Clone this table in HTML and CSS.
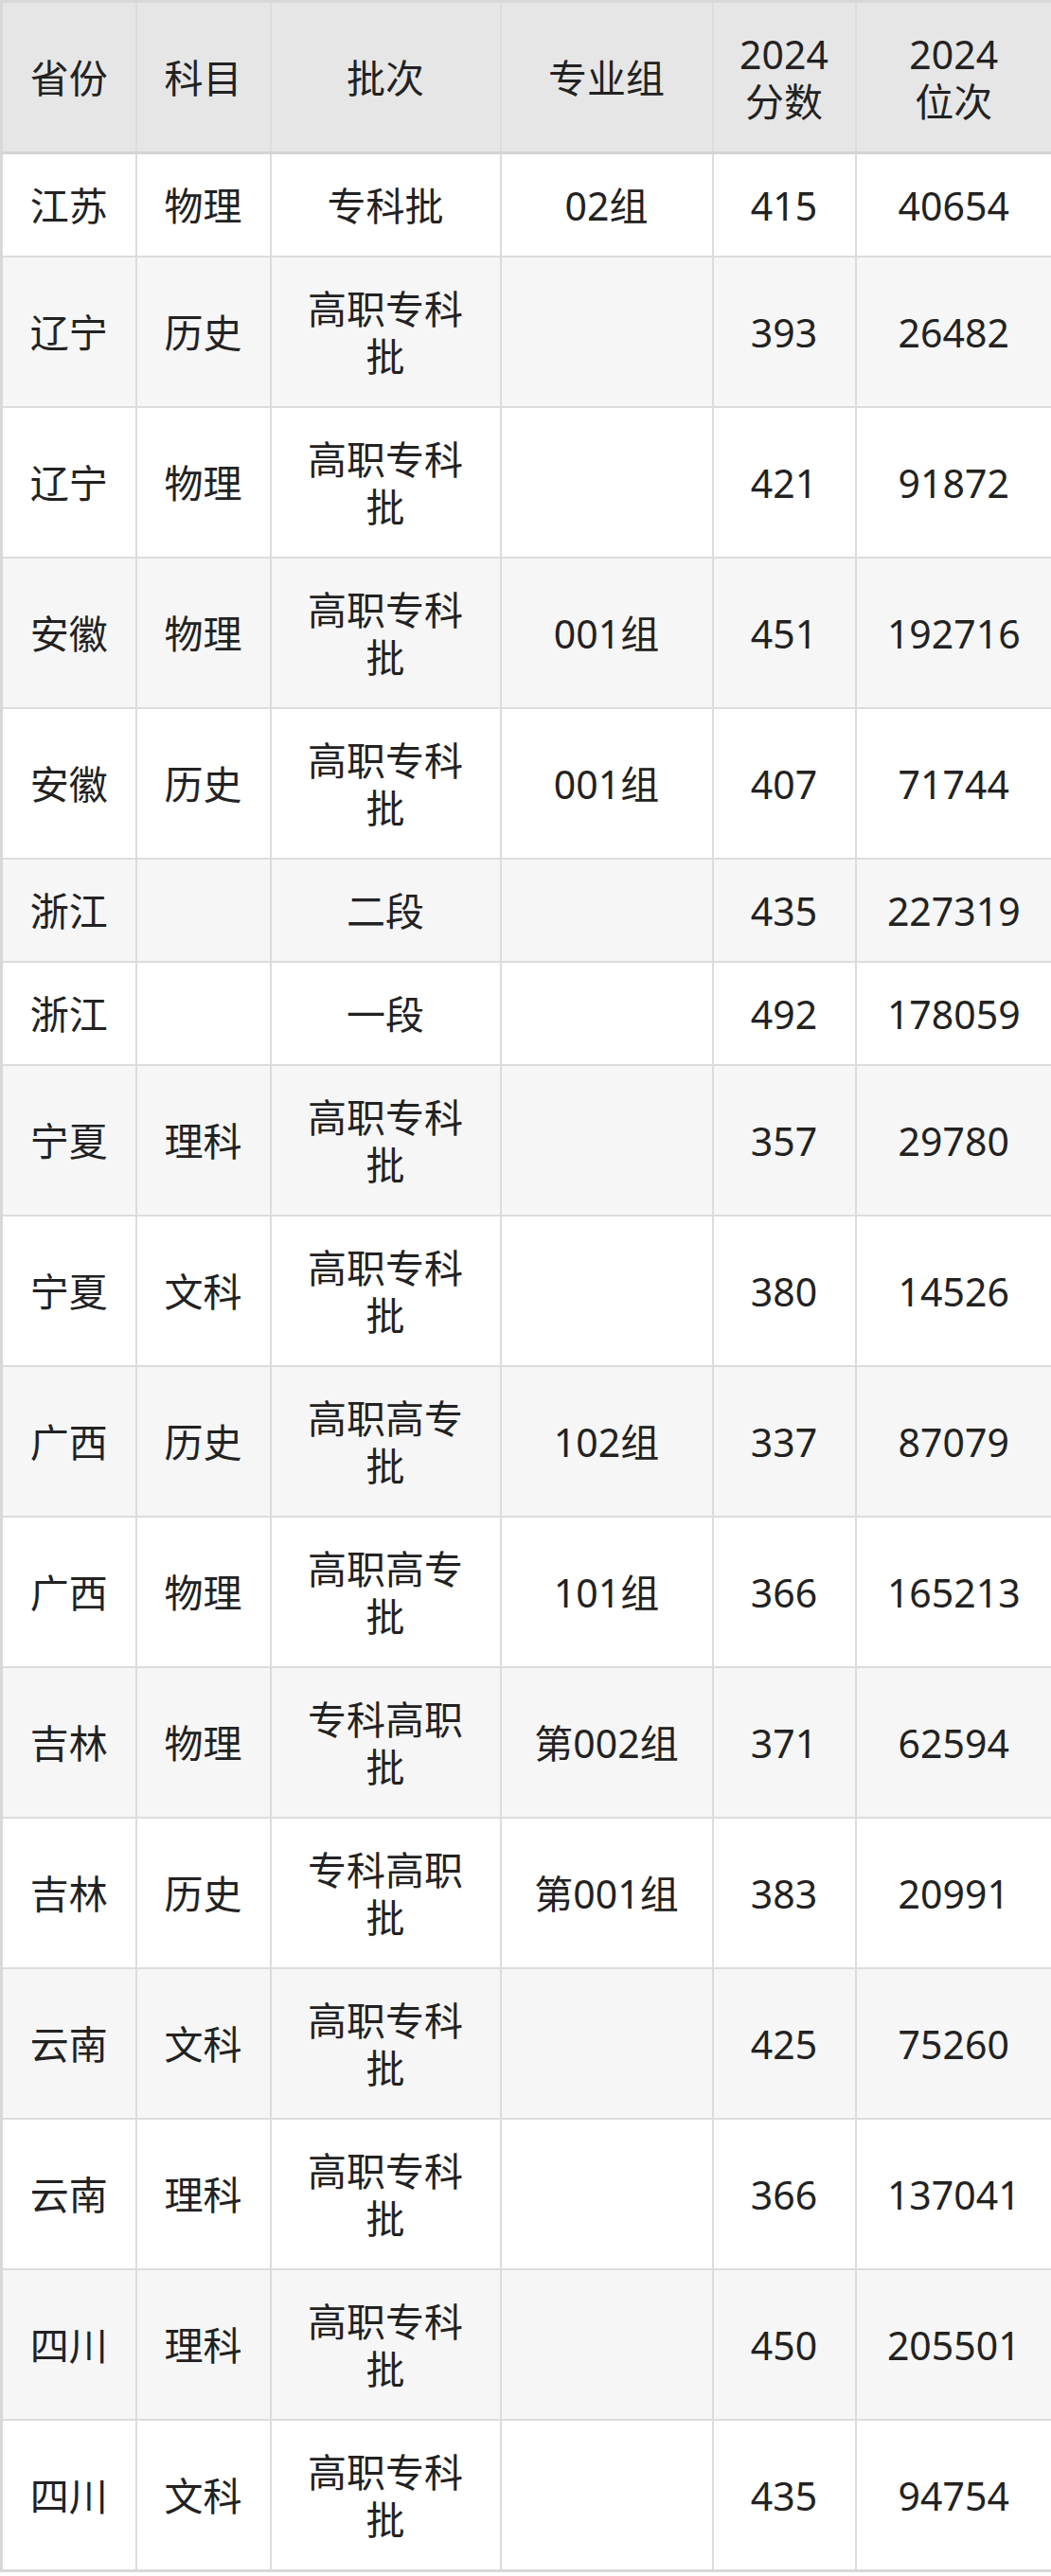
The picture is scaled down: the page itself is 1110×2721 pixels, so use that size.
FILE: index.html
```html
<!DOCTYPE html>
<html lang="zh-CN">
<head>
<meta charset="utf-8">
<title>2024 专科批分数线</title>
<link rel="stylesheet" href="styles.css">
</head>
<body>
<table class="score-table">
  <colgroup>
    <col class="c-prov"><col class="c-subj"><col class="c-batch"><col class="c-group"><col class="c-score"><col class="c-rank">
  </colgroup>
  <thead>
    <tr><th>省份</th><th>科目</th><th>批次</th><th>专业组</th><th>2024<br>分数</th><th>2024<br>位次</th></tr>
  </thead>
  <tbody>
    <tr><td>江苏</td><td>物理</td><td>专科批</td><td>02组</td><td>415</td><td>40654</td></tr>
    <tr><td>辽宁</td><td>历史</td><td>高职专科批</td><td></td><td>393</td><td>26482</td></tr>
    <tr><td>辽宁</td><td>物理</td><td>高职专科批</td><td></td><td>421</td><td>91872</td></tr>
    <tr><td>安徽</td><td>物理</td><td>高职专科批</td><td>001组</td><td>451</td><td>192716</td></tr>
    <tr><td>安徽</td><td>历史</td><td>高职专科批</td><td>001组</td><td>407</td><td>71744</td></tr>
    <tr><td>浙江</td><td></td><td>二段</td><td></td><td>435</td><td>227319</td></tr>
    <tr><td>浙江</td><td></td><td>一段</td><td></td><td>492</td><td>178059</td></tr>
    <tr><td>宁夏</td><td>理科</td><td>高职专科批</td><td></td><td>357</td><td>29780</td></tr>
    <tr><td>宁夏</td><td>文科</td><td>高职专科批</td><td></td><td>380</td><td>14526</td></tr>
    <tr><td>广西</td><td>历史</td><td>高职高专批</td><td>102组</td><td>337</td><td>87079</td></tr>
    <tr><td>广西</td><td>物理</td><td>高职高专批</td><td>101组</td><td>366</td><td>165213</td></tr>
    <tr><td>吉林</td><td>物理</td><td>专科高职批</td><td>第002组</td><td>371</td><td>62594</td></tr>
    <tr><td>吉林</td><td>历史</td><td>专科高职批</td><td>第001组</td><td>383</td><td>20991</td></tr>
    <tr><td>云南</td><td>文科</td><td>高职专科批</td><td></td><td>425</td><td>75260</td></tr>
    <tr><td>云南</td><td>理科</td><td>高职专科批</td><td></td><td>366</td><td>137041</td></tr>
    <tr><td>四川</td><td>理科</td><td>高职专科批</td><td></td><td>450</td><td>205501</td></tr>
    <tr><td>四川</td><td>文科</td><td>高职专科批</td><td></td><td>435</td><td>94754</td></tr>
  </tbody>
</table>
</body>
</html>
```

FILE: styles.css
```css
html, body {
  margin: 0;
  padding: 0;
  background: #ffffff;
}

.score-table {
  width: 1110px;
  border-collapse: collapse;
  table-layout: fixed;
  font-family: "Noto Sans", "Noto Sans CJK SC", sans-serif;
  font-size: 41px;
  line-height: 50px;
  color: #222222;
  border: 3px solid #d8d8d8;
}

.c-prov { width: 142px; }
.c-subj { width: 142px; }
.c-batch { width: 243px; }
.c-group { width: 224px; }
.c-score { width: 151px; }
.c-rank { width: 208px; }

.score-table th,
.score-table td {
  border: 2px solid #dcdcdc;
  padding: 28.5px 22px;
  text-align: center;
  vertical-align: middle;
  font-weight: normal;
}

.score-table td:nth-child(3) {
  padding-left: 26px;
  padding-right: 26px;
}

.score-table thead th {
  background: #e6e6e6;
  border-bottom: 3px solid #d4d4d4;
}

.score-table tbody tr:nth-child(even) td {
  background: #f6f6f6;
}
```
